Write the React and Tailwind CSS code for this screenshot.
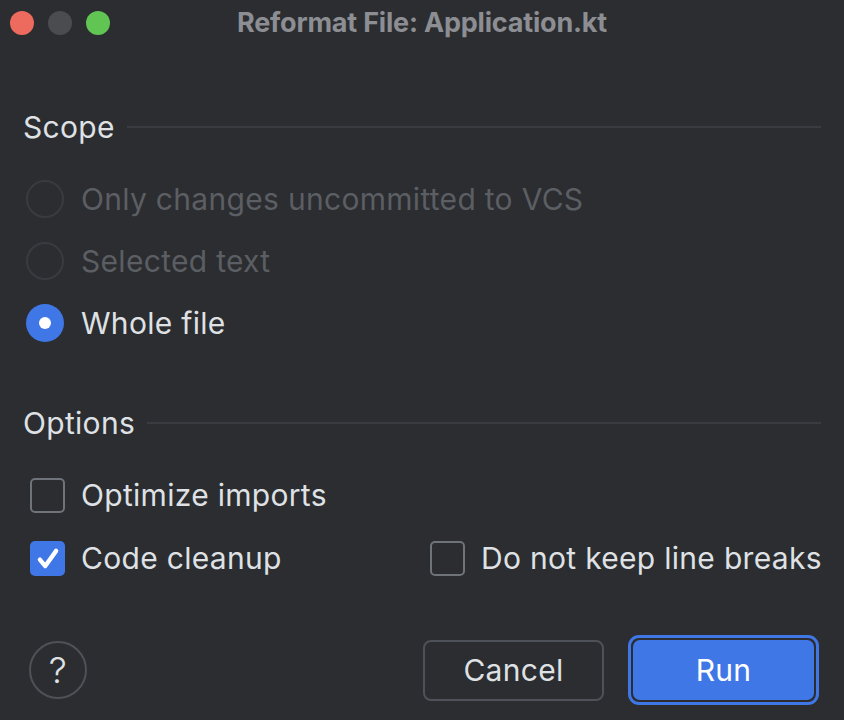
function Radio({ checked, disabled, label }) {
  return (
    <div className="flex items-center h-[62px]">
      <div className="w-[82px] flex justify-start pl-[26px]">
        {checked ? (
          <div className="w-[38px] h-[38px] rounded-full bg-[#4077e6] flex items-center justify-center">
            <div className="w-[12px] h-[12px] rounded-full bg-white" />
          </div>
        ) : (
          <div className="w-[38px] h-[38px] rounded-full border-2 border-[#393b40]" />
        )}
      </div>
      <span className={disabled ? 'text-[#5b5e63] -ml-px' : 'text-[#dfe1e5] -ml-px'}>{label}</span>
    </div>
  )
}

function Checkbox({ checked, label }) {
  return (
    <div className="flex items-center">
      <div className="w-[82px] pl-[30px]">
        {checked ? (
          <div className="w-[35px] h-[35px] rounded-[5px] bg-[#4077e6] flex items-center justify-center">
            <svg width="26" height="26" viewBox="0 0 24 24" fill="none">
              <path d="M4.5 12.5l5 6L19.5 4.5" stroke="white" strokeWidth="4" strokeLinecap="round" strokeLinejoin="round" />
            </svg>
          </div>
        ) : (
          <div className="w-[35px] h-[35px] rounded-[5px] border-2 border-[#6f737a]" />
        )}
      </div>
      <span className="text-[#dfe1e5] -ml-px">{label}</span>
    </div>
  )
}

function Section({ title, children }) {
  return (
    <div>
      <div className="flex items-center gap-[12px] pl-[23px] pr-[23px] h-[40px]">
        <span className="text-[#dfe1e5]">{title}</span>
        <div className="flex-1 h-[2px] bg-[#393b40]" />
      </div>
      {children}
    </div>
  )
}

export default function App() {
  return (
    <div
      className="w-[844px] h-[720px] bg-[#2b2d30] flex flex-col text-[30px] tracking-[0.3px] overflow-hidden"
      style={{ fontFamily: 'Inter, "Noto Sans", sans-serif' }}
    >
      <div className="relative h-[46px] flex items-center">
        <div className="flex items-center gap-[14px] pl-[10px]">
          <div className="w-[24px] h-[24px] rounded-full bg-[#ed6a5e]" />
          <div className="w-[24px] h-[24px] rounded-full bg-[#4b4c50]" />
          <div className="w-[24px] h-[24px] rounded-full bg-[#61c554]" />
        </div>
        <div className="absolute inset-0 flex items-center justify-center">
          <span className="text-[#8c8e93] font-bold text-[27px] tracking-[-0.2px]">Reformat File: Application.kt</span>
        </div>
      </div>

      <div className="mt-[61px]">
        <Section title="Scope">
          <div className="mt-[21px]">
            <Radio disabled label="Only changes uncommitted to VCS" />
            <Radio disabled label="Selected text" />
            <Radio checked label="Whole file" />
          </div>
        </Section>
      </div>

      <div className="mt-[49px]">
        <Section title="Options">
          <div className="mt-[30px] flex flex-col gap-[18px]">
            <Checkbox label="Optimize imports" />
            <div className="flex items-center">
              <div className="w-[400px]">
                <Checkbox checked label="Code cleanup" />
              </div>
              <Checkbox label="Do not keep line breaks" />
            </div>
          </div>
        </Section>
      </div>

      <div className="mt-auto mb-[15px] flex items-center pl-[29px] pr-[25px]">
        <div className="w-[58px] h-[58px] rounded-full border-2 border-[#4e5157] flex items-center justify-center text-[#dfe1e5] text-[36px] font-light">
          ?
        </div>
        <div className="flex-1" />
        <button className="w-[181px] h-[61px] rounded-[8px] border-2 border-[#4e5157] text-[#dfe1e5] text-[30px]">
          Cancel
        </button>
        <div className="ml-[24px] w-[191px] h-[70px] rounded-[11px] border-[3px] border-[#4077e6] p-[2px]">
          <button className="w-full h-full rounded-[7px] bg-[#4077e6] text-white text-[30px]">Run</button>
        </div>
      </div>
    </div>
  )
}
